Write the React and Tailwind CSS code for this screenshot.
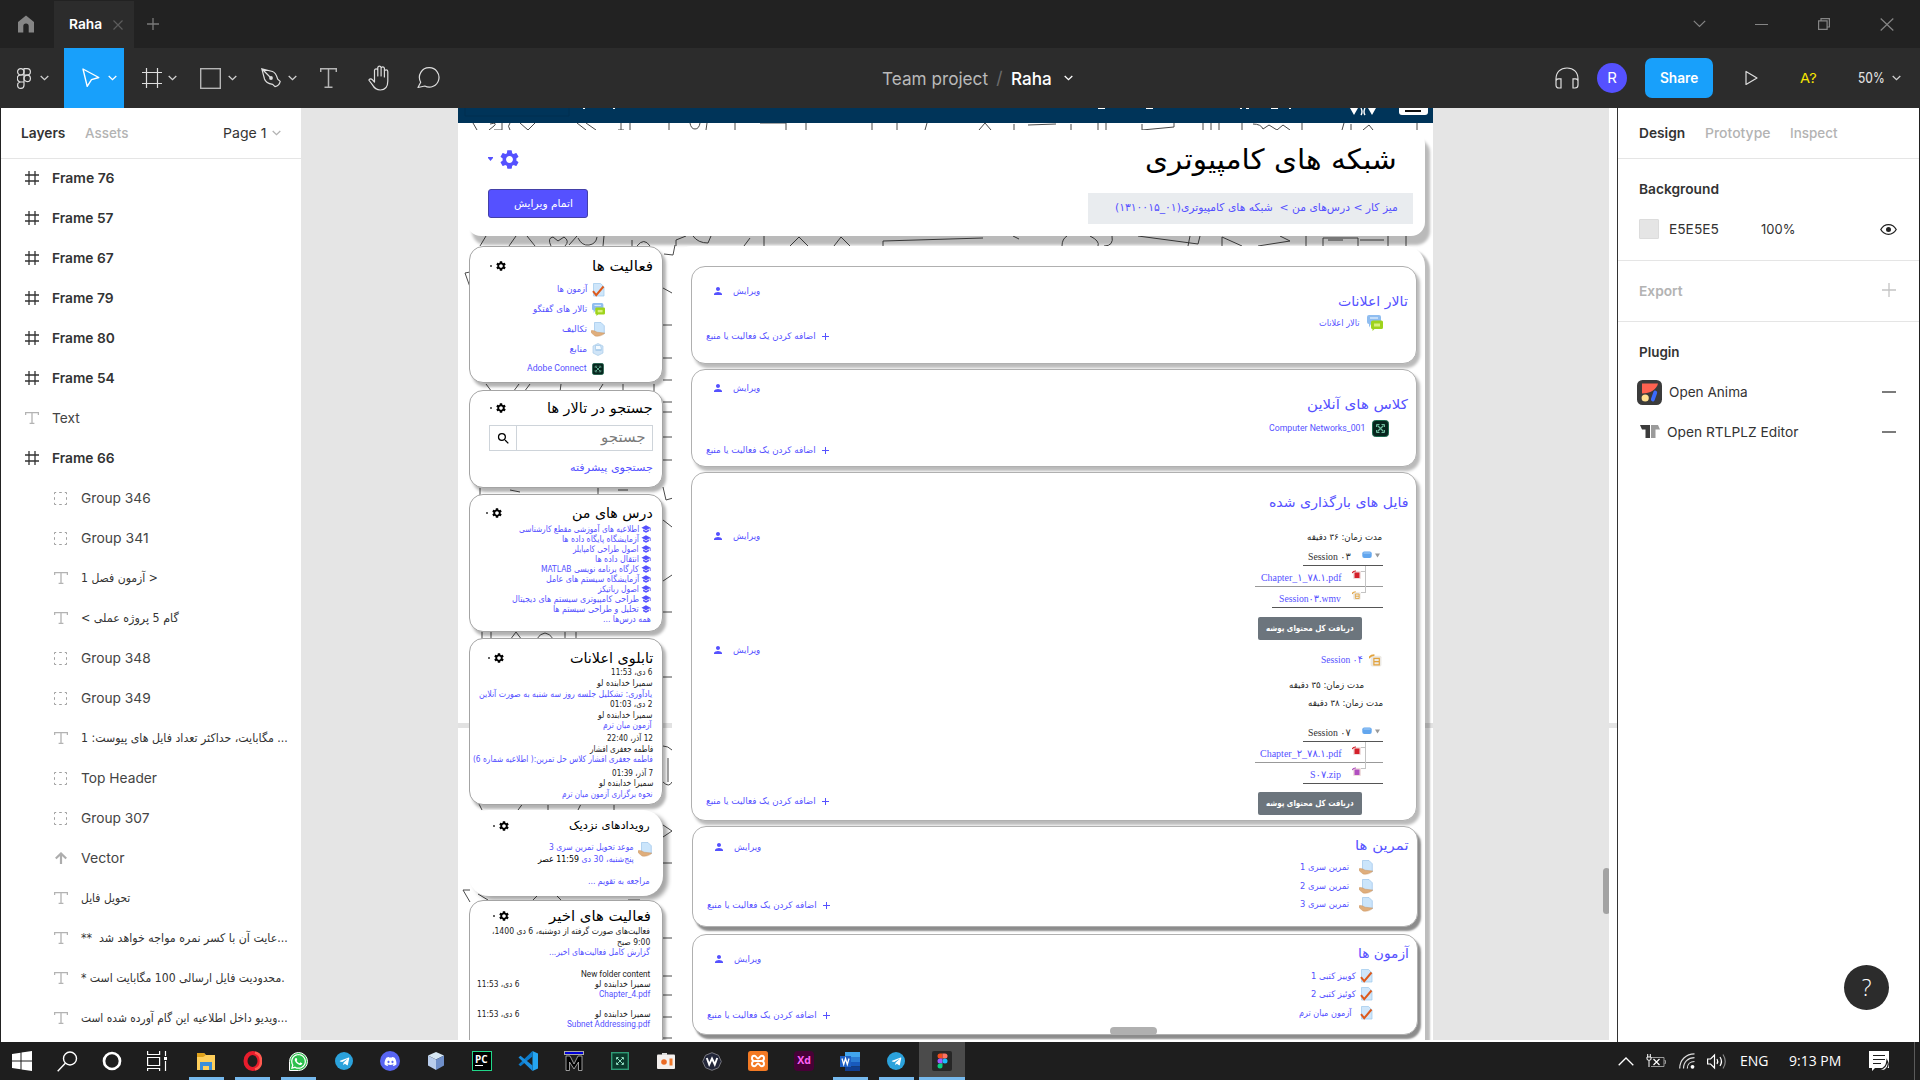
import React, { useLayoutEffect, useRef } from "react";
import { MdSettings, MdPerson, MdSearch, MdSchool } from "react-icons/md";
import { FaWhatsapp, FaTelegramPlane, FaDiscord } from "react-icons/fa";

const FA = "font-['DejaVu_Sans',sans-serif]";
const LINK = "text-[#5551ff]";

/* Single line of text squeezed or stretched to a given width. */
function Fit({ w, dir = "rtl", className = "", children }) {
  const ref = useRef(null);
  useLayoutEffect(() => {
    const apply = () => {
      const el = ref.current;
      if (!el) return;
      el.style.transform = `scaleX(${w / el.offsetWidth})`;
    };
    apply();
    if (document.fonts) document.fonts.ready.then(apply);
  }, [w]);
  return (
    <span dir={dir} className={"block shrink-0 whitespace-nowrap leading-[1.2] " + className} style={{ width: w }}>
      <span ref={ref} className={"inline-block whitespace-nowrap " + (dir === "rtl" ? "origin-right" : "origin-left")}>
        {children}
      </span>
    </span>
  );
}

function Svg({ w, h, vb, className = "", children, ...rest }) {
  return (
    <svg width={w} height={h} viewBox={vb || `0 0 ${w} ${h}`} fill="none" className={"block shrink-0 " + className} {...rest}>
      {children}
    </svg>
  );
}

const Chevron = ({ className = "text-[#d0d0d0]" }) => (
  <Svg w={9} h={6} className={className}>
    <path d="M.7 1l3.8 3.6L8.300 1" stroke="currentColor" strokeWidth="1.3" />
  </Svg>
);

/* ---------- window chrome ---------- */

function TitleBar() {
  return (
    <div className="flex h-12 items-center bg-[#222222]">
      <div className="flex w-[54px] pl-[17px]">
        <Svg w={18} h={18}>
          <path d="M9 .5L1 7v10.500h5.300v-6.200a2.700 2.700 0 015.400 0v6.200H17V7z" fill="#858585" />
        </Svg>
      </div>
      <div className="mt-px flex h-[47px] w-20 items-center bg-[#2c2c2c] pl-[15px]">
        <Fit w={33} dir="ltr" className="text-[13.75px] font-semibold text-white">Raha</Fit>
        <Svg w={10} h={10} className="ml-[11px]">
          <path d="M.5.5l9 9M9.500.5l-9 9" stroke="#5c5c5c" strokeWidth="1.200" />
        </Svg>
      </div>
      <Svg w={12} h={12} className="ml-[13px]">
        <path d="M6 0v12M0 6h12" stroke="#7a7a7a" strokeWidth="1.300" />
      </Svg>
      <div className="ml-auto flex items-center pr-[26px] text-[#858585]">
        <Svg w={13} h={8} className="mr-[49px]"><path d="M.8.8l5.700 5.700L12.200.8" stroke="currentColor" strokeWidth="1.200" /></Svg>
        <Svg w={13} h={2} className="mr-[50px] mt-0.5"><path d="M0 .5h13" stroke="currentColor" /></Svg>
        <Svg w={12} h={12} className="mr-[50px]">
          <path d="M.6 2.900h8.500v8.500H.6zM3 2.500V.6h8.400V9H9.500" stroke="currentColor" strokeWidth="1.200" />
        </Svg>
        <Svg w={14} h={13}><path d="M.7.5l12.600 12M13.300.5L.7 12.500" stroke="currentColor" strokeWidth="1.200" /></Svg>
      </div>
    </div>
  );
}

function ToolBar() {
  const s = { stroke: "#dedede", strokeWidth: 1.2 };
  return (
    <div className="grid h-[60px] grid-cols-[1fr_auto_1fr] items-center bg-[#2c2c2c]">
      <div className="flex h-full items-center">
        <div className="flex w-16 items-center gap-[9px] pl-[17px]">
          <Svg w={14} h={21}>
            <g {...s}>
              <rect x=".6" y=".6" width="6.400" height="6.400" rx="3.200" />
              <path d="M7 .6h3.200a3.200 3.200 0 010 6.400H7zM7 .6v16.700a3.200 3.200 0 11-3.200-3.300H7M3.800 7H7v7H3.800a3.500 3.500 0 010-7z" />
              <circle cx="10.200" cy="10.400" r="3.200" />
            </g>
          </Svg>
          <Chevron />
        </div>
        <div className="flex h-full w-[60px] items-center bg-[#18a0fb] pl-[18px]">
          <Svg w={18} h={20}><path d="M1 1l4.200 17.300 4.300-6.600 7.300-2.200z" stroke="#fff" strokeWidth="1.400" strokeLinejoin="round" /></Svg>
          <Chevron className="ml-2 text-white" />
        </div>
        <Svg w={20} h={20} className="ml-[18px]"><path d="M4.500 0v20M15.500 0v20M0 4.500h20M0 15.500h20" {...s} /></Svg>
        <Chevron className="ml-[6px] text-[#d0d0d0]" />
        <Svg w={21} h={21} className="ml-[23px]"><rect x=".7" y=".7" width="19.600" height="19.600" {...s} strokeWidth="1.400" stroke="#b5b5b5" /></Svg>
        <Chevron className="ml-[7px] text-[#d0d0d0]" />
        <Svg w={20} h={20} className="ml-[24px]">
          <path d="M.8.8l10.700 2.700c2.300.7 4 3.500 5.200 7.600l2.500 2.300c-.5 2.500-2 4.500-5.200 5.300l-2.400-2.300C7 15.600 4.500 14 3.500 11zM1 1l8 8" {...s} />
          <circle cx="10" cy="10" r="1.900" fill="#dedede" />
        </Svg>
        <Chevron className="ml-[7px] text-[#d0d0d0]" />
        <Svg w={17} h={20} className="ml-[23px]"><path d="M.7 4V.7h15.600V4M8.500.7v18.600M4.500 19.300h8" {...s} stroke="#b5b5b5" strokeWidth="1.500" /></Svg>
        <Svg w={23} h={26} className="ml-[31px]">
          <path d="M6.500 15V5.200a1.700 1.700 0 013.300 0V11 2.500a1.700 1.700 0 013.300 0V11 3.200a1.700 1.700 0 013.300 0V12 6.500a1.700 1.700 0 013.400 0V16c0 5.500-2.600 9-7.500 9-4 0-6-1.700-8-5.400L.8 15c1.200-1.500 2.700-1.300 3.700-.2l2 2.200z" {...s} strokeLinejoin="round" />
        </Svg>
        <Svg w={23} h={22} className="ml-[26px]">
          <path d="M12.500.7a9.700 9.700 0 11-4.700 18.300L1 20.500l2.700-5.300A9.700 9.700 0 0112.500.7z" {...s} strokeLinejoin="round" />
        </Svg>
      </div>
      <div className="ml-[35px] flex items-center gap-2 text-[17.5px]">
        <Fit w={106} dir="ltr" className="text-[#b9b9b9]">Team project</Fit>
        <span className="text-[#6d6d6d]">/</span>
        <Fit w={41} dir="ltr" className="font-medium text-white">Raha</Fit>
        <Chevron className="ml-1 text-white" />
      </div>
      <div className="flex items-center justify-end pr-[19px]">
        <Svg w={24} h={22}>
          <path d="M1 17V12C1 5 5.500 1 12 1s11 4 11 11v5M1 14c0-1.500 1-2.200 2.500-2.200H6V21H4c-2 0-3-1-3-3zM23 14c0-1.500-1-2.200-2.500-2.200H18V21h2c2 0 3-1 3-3z" {...s} />
        </Svg>
        <div className="ml-[18px] flex size-[30px] items-center justify-center rounded-full bg-[#5551ff] text-[15px] text-white">R</div>
        <div className="ml-[18px] flex h-10 w-[68px] items-center justify-center rounded-[7px] bg-[#18a0fb]">
          <Fit w={38} dir="ltr" className="text-[14px] font-semibold text-white">Share</Fit>
        </div>
        <Svg w={13} h={16} className="ml-8"><path d="M1 1.500v13L12 8z" {...s} strokeLinejoin="round" /></Svg>
        <Fit w={17} dir="ltr" className="ml-[42px] text-[13.75px] text-[#f7e600]">A?</Fit>
        <Fit w={27} dir="ltr" className="ml-[41px] text-[14px] font-medium text-[#dedede]">50%</Fit>
        <Chevron className="ml-[7px] text-[#d0d0d0]" />
      </div>
    </div>
  );
}

/* ---------- layers panel ---------- */

const LayerIcon = ({ kind }) => {
  if (kind === "frame")
    return <Svg w={14} h={14}><path d="M4 0v14M10 0v14M0 4h14M0 10h14" stroke="#333" strokeWidth="1.300" /></Svg>;
  if (kind === "text")
    return <Svg w={14} h={12}><path d="M.6 3V.7h12.800V3M7 .7v10.600M4.600 11.300h4.800" stroke="#b3b3b3" strokeWidth="1.300" /></Svg>;
  if (kind === "vector")
    return <Svg w={14} h={12}><path d="M7 12V2M1.800 6.500L7 1.500l5.200 5" stroke="#adadad" strokeWidth="2.200" /></Svg>;
  return (
    <Svg w={13} h={13}>
      <path d="M.5 2.200V.5h1.700M5.200.5h2.600M10.800 .5h1.700V2.200M12.500 5.200v2.600M12.500 10.800v1.700H10.800M7.800 12.500H5.200M2.200 12.500H.5V10.800M.5 7.800V5.200" stroke="#a0a0a0" />
    </Svg>
  );
};

const LAYERS = [
  ["frame", "Frame 76", 62], ["frame", "Frame 57", 62], ["frame", "Frame 67", 62],
  ["frame", "Frame 79", 62], ["frame", "Frame 80", 63], ["frame", "Frame 54", 63],
  ["text", "Text", 28, "top"], ["frame", "Frame 66", 63],
  ["group", "Group 346", 70], ["group", "Group 341", 68],
  ["text", "1 آزمون فصل >", 77, "ltr"], ["text", "< گام 5 پروژه عملی", 98, "ltr"],
  ["group", "Group 348", 70], ["group", "Group 349", 70],
  ["text", "... مگابایت، حداکثر تعداد فایل های پیوست: 1", 207, "rtl"],
  ["group", "Top Header", 76], ["group", "Group 307", 69], ["vector", "Vector", 43],
  ["text", "تحویل فایل", 49, "rtl"],
  ["text", "...عایت آن با کسر نمره مواجه خواهد شد\u00a0 **", 207, "rtl"],
  ["text", ".محدودیت فایل ارسالی 100 مگابایت است *", 204, "rtl"],
  ["text", "...ویدیو داخل اطلاعیه این گام آورده شده است", 207, "rtl"],
];

function LayersPanel() {
  return (
    <aside className="flex w-[300px] shrink-0 flex-col bg-white text-[13.75px] text-[#333]">
      <div className="flex h-[51px] items-center border-b border-[#e5e5e5] pl-5 pr-5">
        <Fit w={44} dir="ltr" className="font-semibold">Layers</Fit>
        <Fit w={44} dir="ltr" className="ml-5 font-medium text-[#b3b3b3]">Assets</Fit>
        <Fit w={43} dir="ltr" className="ml-auto">Page 1</Fit>
        <Chevron className="ml-[6px] text-[#b3b3b3]" />
      </div>
      <div className="-mt-px flex flex-col">
        {LAYERS.map(([kind, name, w, d], i) => (
          <div key={i} className={"flex h-10 items-center " + (i > 7 ? "pl-[53px]" : "pl-6")}>
            <div className="flex w-[27px]"><LayerIcon kind={kind} /></div>
            <Fit w={w} dir={d === "rtl" ? "rtl" : "ltr"} className={kind === "frame" ? "font-semibold" : d && d !== "top" ? "font-['DejaVu_Sans',sans-serif] text-[12px]" : "text-[#444]"}>
              {name}
            </Fit>
          </div>
        ))}
      </div>
    </aside>
  );
}

/* ---------- inspector ---------- */

const Minus = () => <Svg w={14} h={2} className="ml-auto"><path d="M0 1h14" stroke="#333" strokeWidth="1.300" /></Svg>;

function DesignPanel() {
  return (
    <aside className="relative flex w-[303px] shrink-0 flex-col border-l border-r border-l-[#333] border-r-[#222] bg-white text-[13.75px] text-[#333]">
      <div className="flex h-[51px] items-center border-b border-[#e5e5e5] pl-[21px] font-medium">
        <Fit w={46} dir="ltr" className="font-semibold">Design</Fit>
        <Fit w={65} dir="ltr" className="ml-5 text-[#b3b3b3]">Prototype</Fit>
        <Fit w={48} dir="ltr" className="ml-5 text-[#b3b3b3]">Inspect</Fit>
      </div>
      <div className="flex h-[102px] flex-col border-b border-[#e5e5e5] pl-[21px] pr-[22px] pt-[10px]">
        <div className="flex h-10 items-center"><Fit w={80} dir="ltr" className="font-semibold">Background</Fit></div>
        <div className="flex h-10 items-center">
          <div className="size-5 rounded-[1px] border border-[#dcdcdc] bg-[#e5e5e5]" />
          <Fit w={50} dir="ltr" className="ml-[10px]">E5E5E5</Fit>
          <Fit w={34} dir="ltr" className="ml-[42px]">100%</Fit>
          <Svg w={17} h={11} className="ml-auto">
            <path d="M.8 5.500C4.500-.9 12.500-.9 16.200 5.500c-3.700 6.400-11.700 6.400-15.400 0z" stroke="#222" strokeWidth="1.300" />
            <circle cx="8.500" cy="5.500" r="2.500" fill="#222" />
          </Svg>
        </div>
      </div>
      <div className="flex h-[61px] items-center border-b border-[#e5e5e5] pl-[21px] pr-[23px]">
        <Fit w={44} dir="ltr" className="font-semibold text-[#b3b3b3]">Export</Fit>
        <Svg w={14} h={14} className="-mt-0.5 ml-auto"><path d="M7 0v14M0 7h14" stroke="#c4c4c4" strokeWidth="1.300" /></Svg>
      </div>
      <div className="flex flex-col pl-[19px] pr-[23px] pt-[10px]">
        <div className="flex h-10 items-center pl-0.5"><Fit w={41} dir="ltr" className="font-semibold">Plugin</Fit></div>
        <div className="flex h-10 items-center">
          <Svg w={25} h={25}>
            <rect width="25" height="25" rx="5.500" fill="#3b3b3b" />
            <path d="M5 3.500h16c-1.500 6-7.500 10-16 10z" fill="#ff6250" />
            <circle cx="8.200" cy="18" r="3.600" fill="#ffdf90" />
            <path d="M18.300 12.500l-2.500 7" stroke="#3b6bff" strokeWidth="3.800" strokeLinecap="round" />
          </Svg>
          <Fit w={79} dir="ltr" className="ml-[7px]">Open Anima</Fit>
          <Minus />
        </div>
        <div className="flex h-10 items-center">
          <Svg w={20} h={14} className="ml-[3px]">
            <path d="M0 0h10v13H5.500V4.500H2z" fill="#3c3c3c" />
            <path d="M11 0h7l2 4.500h-4.500V13H11z" fill="#9b9b9b" />
          </Svg>
          <Fit w={131} dir="ltr" className="ml-[7px]">Open RTLPLZ Editor</Fit>
          <Minus />
        </div>
      </div>
      <div className="absolute bottom-[32px] right-[30px] flex size-[45px] items-center justify-center rounded-full bg-[#2c2c2c] font-['Open_Sans',sans-serif] text-[23px] font-light text-white">?</div>
    </aside>
  );
}

/* ---------- small pictograms of the design ---------- */

const Quiz = () => (
  <Svg w={13} h={14}>
    <path d="M1.500.5h7l3.500 3.300v9.200H1.500z" fill="#cfe6fa" stroke="#9cc8ec" strokeWidth=".7" />
    <path d="M1 8.200l3.200 4L11.500 3.500" stroke="#dd5a1c" strokeWidth="2" />
  </Svg>
);
const Forum = ({ s = 13 }) => (
  <Svg w={s} h={s} vb="0 0 16 16">
    <path d="M2 0h10q2 0 2 2v7H4l-2 3.500V9Q0 9 0 7V2Q0 0 2 0z" fill="#8fbdf0" />
    <path d="M3 3h8" stroke="#d6e8fb" strokeWidth="1.500" />
    <path d="M6 5.500h8.500Q16 5.500 16 7v5.500q0 1.500-1.500 1.500H7.500L5.500 16v-2Q4 14 4 12.500V7Q4 5.500 6 5.500z" fill="#9ed31c" />
    <path d="M7 8.500h6v3H7z" fill="#d8f07c" />
  </Svg>
);
const Assign = () => (
  <Svg w={14} h={15}>
    <path d="M3.500.5h6.500l3.300 3.300v8H3.500z" fill="#cbe5fb" stroke="#9cc4ea" strokeWidth=".7" />
    <path d="M0 8.800c2.500-.8 4 .2 6 1.400l7.800.9c-2 2.500-7 3.800-9.800 2.900L.5 11z" fill="#dfae7c" stroke="#c48b54" strokeWidth=".4" />
  </Svg>
);
const Resource = () => (
  <Svg w={12} h={13}>
    <path d="M1 3l5-2.500L11 3v7l-5 2.500L1 10z" fill="#cfe4f7" stroke="#a9cbe9" strokeWidth=".7" />
    <path d="M3.500 2.500h5l1 4h-6zM3.500 7.500h6" fill="#f4faff" stroke="#93bfe6" strokeWidth=".6" />
  </Svg>
);
const Connect = ({ s = 12 }) => (
  <Svg w={s} h={s} vb="0 0 17 17">
    <rect x=".5" y=".5" width="16" height="16" rx="3" fill="#06251d" stroke="#1d6b50" />
    <path d="M5.500 5.500l6 6M11.500 5.500l-6 6" stroke="#6dbb9d" strokeWidth="1.200" />
    <path d="M4.500 7v-2.500h3M9.500 4.500h3V7M12.500 10v2.500h-3M7.500 12.500h-3V10" stroke="#6dbb9d" />
  </Svg>
);
const FileIcon = ({ c, s = 9 }) => (
  <Svg w={s} h={s} vb="0 0 12 12">
    <rect x="1.500" y="1.500" width="10" height="10" rx="1.500" fill="#ece9e4" />
    <path d="M4.500 4h5v6h-5zM4.500 7h5" stroke={c} strokeWidth="1.100" />
    <path d="M0 4Q1 1 5 1" stroke={c} strokeWidth="1.600" />
  </Svg>
);
const FilledFile = ({ c }) => (
  <Svg w={9} h={9}>
    <rect x="1" y="1" width="8" height="8" rx="1" fill="#f0dede" />
    <rect x="2.500" y="2.500" width="5" height="5.500" fill={c} />
    <path d="M.3 3Q1 .8 4 1" stroke={c} strokeWidth="1.200" />
  </Svg>
);

/* ---------- frame: left column ---------- */

const SIDE = "relative box-border ml-[11px] w-[194px] shrink-0 rounded-[14px] border border-[#a4a4a4] bg-white shadow-[3px_4px_3px_rgba(0,0,0,0.3)] " + FA;

function Head({ w, pr = "pr-[9px]", gear = "pl-[20px]", size = "text-[14px]", className = "", children }) {
  return (
    <div className={`flex items-center justify-between ${pr} ${gear} ${className}`}>
      <Fit w={w} className={`${size} text-black`}>{children}</Fit>
      <div className="flex items-center gap-[3px] text-black">
        <MdSettings size={12} />
        <span className="size-0.5 rounded-full bg-[#333]" />
      </div>
    </div>
  );
}

const Line = ({ w, cls = "", children }) => (
  <div className={"flex h-[10px] items-center " + cls}>
    <Fit w={w} className="text-[9px]">{children}</Fit>
  </div>
);

const COURSES = [
  ["اطلاعیه های آموزشی مقطع کارشناسی", 120], ["آزمایشگاه پایگاه داده ها", 77], ["اصول طراحی کامپایلر", 66],
  ["انتقال داده ها", 44], ["کارگاه برنامه نویسی MATLAB", 98], ["آزمایشگاه سیستم های عامل", 93],
  ["اصول رباتیکز", 41], ["طراحی کامپیوتری سیستم های دیجیتال", 127], ["تحلیل و طراحی سیستم ها", 86],
];

function SideColumn() {
  const acts = [
    ["آزمون ها", 30, <Quiz />, "h-[19px]"], ["تالار های گفتگو", 54, <Forum />, "h-5"],
    ["تکالیف", 25, <Assign />, "h-5"], ["منابع", 18, <Resource />, "h-5"], ["Adobe Connect", 60, <Connect />, "h-[19px]"],
  ];
  return (
    <div className="flex h-[794px] w-[214px] shrink-0 flex-col overflow-hidden" dir="ltr">
      <section dir="rtl" className={SIDE + " h-[137px]"}>
        <Head w={61} className="mt-[8px] h-[22px]">فعالیت ها</Head>
        <div className="mt-[3px] flex flex-col pr-[57px]">
          {acts.map(([t, w, icon, h]) => (
            <div key={t} className={"flex items-center gap-[4px] " + h}>
              <div className="flex w-[14px] justify-center">{icon}</div>
              <Fit w={w} dir={t[0] === "A" ? "ltr" : "rtl"} className={LINK + (t[0] === "A" ? " font-[Roboto] text-[9px]" : " text-[9px]")}>{t}</Fit>
            </div>
          ))}
        </div>
      </section>

      <section dir="rtl" className={SIDE + " mt-[7px] h-[98px]"}>
        <Head w={106} className="mt-[7px] h-[20px]">جستجو در تالار ها</Head>
        <div className="mr-[9px] mt-[7px] flex h-[26px] w-[164px] items-center border border-[#ced4da]">
          <div className="flex h-full flex-1 items-center pb-0.5 pr-[6px]"><Fit w={45} className="text-[14px] text-[#7a7a7a]">جستجو</Fit></div>
          <div className="flex h-full w-[27px] items-center justify-center border-r border-[#ced4da] text-black"><MdSearch size={15} /></div>
        </div>
        <div className="mr-[9px] mt-[7px] flex h-[18px] items-center"><Fit w={83} className={"text-[10.5px] " + LINK}>جستجوی پیشرفته</Fit></div>
      </section>

      <section dir="rtl" className={SIDE + " mt-[6px] h-[138px]"}>
        <Head w={81} gear="pl-[16px]" className="mt-[8px] h-5">درس های من</Head>
        <div className={"mt-[1px] flex flex-col pr-[11px] " + LINK}>
          {COURSES.map(([t, w]) => (
            <div key={t} className="flex h-[10px] items-center gap-[2px]">
              <MdSchool size={10} />
              <Fit w={w} className="text-[9px]">{t}</Fit>
            </div>
          ))}
          <Line w={48}>همه درس‌ها ...</Line>
        </div>
      </section>

      <section dir="rtl" className={SIDE + " mt-[6px] h-[167px]"}>
        <Head w={83} gear="pl-[18px]" className="mt-[8px] h-[22px]">تابلوی اعلانات</Head>
        <div className="-mt-px flex flex-col pr-[10px] text-[#222]">
          <Line w={41} cls="-mt-px">6 دی، 11:53</Line>
          <Line w={56} cls="mt-[1px]">سمیرا خدابنده لو</Line>
          <Line w={173} cls={"mt-[1px] " + LINK}>یادآوری: تشکلیل جلسه روز سه شنبه به صورت آنلاین</Line>
          <Line w={42}>2 دی، 01:03</Line>
          <Line w={55} cls="mt-px">سمیرا خدابنده لو</Line>
          <Line w={49} cls={LINK}>آزمون میان ترم</Line>
          <Line w={46} cls="-mr-px mt-[3px]">12 آذر، 22:40</Line>
          <Line w={63} cls="-mr-px mt-px">فاطمه جعفری افشار</Line>
          <Line w={180} cls={"-mr-px " + LINK}>فاطمه جعفری افشار کلاس حل تمرین:( اطلاعیه شماره 6)</Line>
          <Line w={41} cls="-mr-px mt-[4px]">7 آذر، 01:39</Line>
          <Line w={55} cls="-mr-px">سمیرا خدابنده لو</Line>
          <Line w={91} cls={"-mr-px mt-px " + LINK}>نحوه برگزاری آزمون میان ترم</Line>
        </div>
      </section>

      <section dir="rtl" className={"relative ml-[11px] mt-[5px] h-[86px] w-[194px] shrink-0 rounded-[20px] bg-white shadow-[5px_4px_4px_rgba(0,0,0,0.35)] " + FA}>
        <Head w={81} pr="pr-[13px]" gear="pl-[24px]" size="text-[11px]" className="h-[32px]">رویدادهای نزدیک</Head>
        <div className="flex pr-[11px]">
          <Assign />
          <div className="mr-[4px] flex flex-col">
            <Line w={85} cls={LINK}>موعد تحویل تمرین سری 3</Line>
            <Line w={96} cls="mt-[2px]"><span className={LINK}>پنج‌شنبه، 30 دی</span> <span className="text-black">11:59 عصر</span></Line>
          </div>
        </div>
        <Line w={62} cls={"mt-[12px] pr-[13px] " + LINK}>مراجعه به تقویم ...</Line>
      </section>

      <section dir="rtl" className={SIDE + " mt-[4px] h-[160px]"}>
        <Head w={102} pr="pr-[11px]" gear="pl-[23px]" className="mt-[4px] h-[22px]">فعالیت های اخیر</Head>
        <div className="flex flex-col pr-[12px] text-[#222]">
          <Line w={158} cls="-mt-px">فعالیت‌های صورت گرفته از دوشنبه، 6 دی 1400،</Line>
          <Line w={33} cls="mt-px">9:00 صبح</Line>
          <Line w={101} cls={LINK}>گزارش کامل فعالیت‌های اخیر...</Line>
          <div className="mt-[12px] flex h-[10px] items-center"><Fit w={69} dir="ltr" className="font-[Roboto] text-[9px]">New folder content</Fit></div>
          <div className="flex justify-between pl-[7px]"><Line w={56}>سمیرا خدابنده لو</Line><Line w={42}>6 دی، 11:53</Line></div>
          <div className="flex h-[10px] items-center"><Fit w={51} dir="ltr" className={"font-[Roboto] text-[9px] " + LINK}>Chapter_4.pdf</Fit></div>
          <div className="mt-[10px] flex justify-between pl-[7px]"><Line w={56}>سمیرا خدابنده لو</Line><Line w={42}>6 دی، 11:53</Line></div>
          <div className="flex h-[10px] items-center"><Fit w={83} dir="ltr" className={"font-[Roboto] text-[9px] " + LINK}>Subnet Addressing.pdf</Fit></div>
        </div>
      </section>
    </div>
  );
}

/* ---------- frame: main column ---------- */

const Edit = ({ cls }) => (
  <div className={"flex h-4 items-center gap-[9px] pl-[20px] text-[#5551ff] " + cls}>
    <MdPerson size={12} />
    <Fit w={27} className="text-[9px]">ویرایش</Fit>
  </div>
);
const Add = ({ cls }) => (
  <div className={"flex h-4 items-center gap-[6px] pl-[14px] text-[#5551ff] " + cls}>
    <Fit w={110} className="text-[9px]">اضافه کردن یک فعالیت یا منبع</Fit>
    <Svg w={7} h={7}><path d="M3.500 0v7M0 3.500h7" stroke="#5551ff" /></Svg>
  </div>
);

function MainCard({ cls, left, children }) {
  return (
    <section className={"flex w-[726px] shrink-0 justify-between rounded-[14px] border border-[#b0b0b0] bg-white " + cls + " " + FA}>
      <div className="flex flex-col">{left}</div>
      <div dir="rtl" className="flex flex-col">{children}</div>
    </section>
  );
}
const SOFT = "shadow-[3px_4px_3px_rgba(0,0,0,0.27)]";
const HARD = "shadow-[3px_4px_2px_rgba(0,0,0,0.45)]";

const CardTitle = ({ w, cls, children }) => (
  <div className={"flex h-5 items-center pr-[8px] " + cls}>
    <Fit w={w} className={"text-[13.5px] " + LINK}>{children}</Fit>
  </div>
);
const Item = ({ w, cls, icon, ltr, children }) => (
  <div className={"flex h-4 items-center " + cls}>
    {icon}
    <Fit w={w} dir={ltr ? "ltr" : "rtl"} className={LINK + (ltr ? " font-[Roboto] text-[9px]" : " text-[9px]")}>{children}</Fit>
  </div>
);

const FolderRow = ({ children }) => (
  <div className="mr-[33px] flex h-[21px] w-20 items-center border-b border-[#555] pt-1">
    <svg width="5" height="5" viewBox="0 0 5 5" className="mb-[3px] mr-[3px] block shrink-0"><path d="M0 .5h5L2.500 4.500z" fill="#999" /></svg>
    <Svg w={10} h={8} className="mb-1 ml-[11px] mr-[3px]"><rect x=".3" y=".5" width="9.400" height="6.500" rx="2" fill="#62a6ee" /><path d="M1.500 2h7" stroke="#a9cff7" /></Svg>
    <Fit w={43} dir="ltr" className="font-['Liberation_Serif','DejaVu_Sans',serif] text-[10px] text-[#333]">{children}</Fit>
  </div>
);
/* The bordered span before the icon draws one branch of the folder tree. */
const FileRow = ({ w, cls, icon, last, children }) => (
  <div className={"mr-[33px] flex h-[21px] items-center border-b " + cls}>
    <span className={"mr-[17px] w-[5px] shrink-0 self-start border-b border-r border-[#c4c4c4] " + (last ? "-mt-[15px] h-[21px]" : "h-[6px]")} />
    <div className="mb-1 ml-[11px] flex">{icon}</div>
    <div className="flex pt-[3px]">
      <Fit w={w} dir="ltr" className={"font-['Liberation_Serif','DejaVu_Sans',serif] text-[10px] " + LINK}>{children}</Fit>
    </div>
  </div>
);
const Duration = ({ cls, children }) => (
  <div className={"flex h-4 items-center " + cls}><Fit w={75} className="text-[9px] text-[#222]">{children}</Fit></div>
);
const Download = ({ cls }) => (
  <div className={"mr-[54px] flex h-[23px] w-[104px] items-center justify-center rounded-[2px] bg-[#6c757d] " + cls}>
    <Fit w={88} className="text-[8.5px] font-bold text-white">دریافت کل محتوای پوشه</Fit>
  </div>
);

function MainColumn() {
  return (
    <main dir="ltr" className="flex h-[794px] w-[753px] shrink-0 flex-col rounded-t-[20px] bg-white pl-[19px] pt-5 shadow-[5px_4px_2px_rgba(0,0,0,0.26)]">
      <MainCard cls={SOFT + " h-[98px]"} left={<><Edit cls="mt-4" /><Add cls="mt-[29px]" /></>}>
        <CardTitle w={70} cls="mt-[24px]">تالار اعلانات</CardTitle>
        <Item w={41} cls="mt-[4px] gap-[7px] pr-[33px]" icon={<Forum s={16} />}>تالار اعلانات</Item>
      </MainCard>
      <MainCard cls={SOFT + " mt-[5px] h-[98px]"} left={<><Edit cls="mt-[10px]" /><Add cls="mt-[46px]" /></>}>
        <CardTitle w={101} cls="mt-[24px]">کلاس های آنلاین</CardTitle>
        <Item w={96} ltr cls="mt-[6px] gap-[7px] pr-[27px]" icon={<Connect s={17} />}>Computer Networks_001</Item>
      </MainCard>
      <MainCard cls={SOFT + " mt-[5px] h-[349px]"} left={<><Edit cls="mt-[55px]" /><Edit cls="mt-[98px]" /><Add cls="mt-[135px]" /></>}>
        <CardTitle w={139} cls="mt-[19px]">فایل های بارگذاری شده</CardTitle>
        <Duration cls="mt-[17px] pr-[34px]">مدت زمان: ۳۶ دقیقه</Duration>
        <FolderRow>Session ۰۳</FolderRow>
        <FileRow w={80} cls="w-[128px] border-[#999]" icon={<FilledFile c="#d4202a" />}>Chapter_۱_۷۸.۱.pdf</FileRow>
        <FileRow w={62} last cls="w-[111px] border-[#555]" icon={<FileIcon c="#e2a33d" />}>Session۰۳.wmv</FileRow>
        <Download cls="mt-[9px]" />
        <div className="mt-[12px] flex h-4 items-center gap-[6px] pr-[34px]">
          <FileIcon c="#e2a33d" s={13} />
          <Fit w={42} dir="ltr" className={"font-['Liberation_Serif','DejaVu_Sans',serif] text-[10px] " + LINK}>Session ۰۴</Fit>
        </div>
        <Duration cls="mt-[9px] pr-[52px]">مدت زمان: ۳۵ دقیقه</Duration>
        <Duration cls="mt-[2px] pr-[33px]">مدت زمان: ۳۸ دقیقه</Duration>
        <div className="h-[10px]" />
        <FolderRow>Session ۰۷</FolderRow>
        <FileRow w={81} cls="w-[128px] border-[#999]" icon={<FilledFile c="#d4202a" />}>Chapter_۲_۷۸.۱.pdf</FileRow>
        <FileRow w={31} last cls="w-20 border-[#555]" icon={<FilledFile c="#b04fc0" />}>S۰۷.zip</FileRow>
        <Download cls="mt-[8px]" />
      </MainCard>
      <MainCard cls={HARD + " ml-px mt-[5px] h-[101px]"} left={<><Edit cls="mt-[12px]" /><Add cls="mt-[42px]" /></>}>
        <CardTitle w={54} cls="mt-[8px]">تمرین ها</CardTitle>
        <Item w={49} cls="mt-[4px] gap-[10px] pr-[44px]" icon={<Assign />}>تمرین سری 1</Item>
        <Item w={49} cls="mt-[3px] gap-[10px] pr-[44px]" icon={<Assign />}>تمرین سری 2</Item>
        <Item w={49} cls="mt-[2px] gap-[10px] pr-[44px]" icon={<Assign />}>تمرین سری 3</Item>
      </MainCard>
      <MainCard cls={HARD + " ml-px mt-[7px] h-[101px]"} left={<><Edit cls="mt-4" /><Add cls="mt-[40px]" /></>}>
        <CardTitle w={51} cls="mt-[8px]">آزمون ها</CardTitle>
        <Item w={45} cls="mt-[5px] gap-[4px] pr-[44px]" icon={<Quiz />}>کوییز کتبی 1</Item>
        <Item w={45} cls="mt-[2px] gap-[4px] pr-[44px]" icon={<Quiz />}>کوئیز کتبی 2</Item>
        <Item w={53} cls="mt-[3px] gap-[8px] pr-[44px]" icon={<Quiz />}>آزمون میان ترم</Item>
      </MainCard>
    </main>
  );
}

/* Line-art wallpaper that shows through the gaps between the cards. */
const Doodles = () => (
  <svg width="975" height="932" viewBox="0 0 975 932" fill="none" className="absolute left-0 top-0 block" stroke="#4a4a4a">
    <path d="M15 15l4 7M32 16q8-2 4 2l-5 4M36 22h8M44 15v7M52 15q-3 3 0 7M62 15l8 7 7-7M119 15l9 7M128 15l10 7M163 15v7M160 22h6M172 15v7M211 15v7M232 15q1 6 5 6t5-6M249 15l-1 7M277 15v7M302 15h26v7M348 15v7M414 15v7M439 15v7M467 22l2-7M521 22l6-7 6 7M556 16v6M570 17l28-1M613 16v6M640 22v-7M648 22v-7M684 16v6l32-3v-4M745 15v7M753 22v-7M761 15v7M784 15v7M795 16q8 0 10 5l6-4 8 5 6-5 7 5M844 15v7M884 22l2-7M893 22v-6M905 22l6-5 4 5M959 15v7" />
    <path d="M22 138l6-10M51 138l7-10M69 128l8 10M93 138q-4-8 2-9l5 4 6-4q6 4 1 9M120 130q4 8 11 7t8-8M111 137l8-9M145 138l1-10M174 138v-6M179 138q7-9 13 0M218 138v-6l10-4M235 128q5 7 15 7l3-7M286 138l6-8M306 128v10M332 138l9-9 9 9M376 138l7-9 9 9M425 138v-5l100-3M555 128l6 3M604 138q0-7 5-10M632 128q10 5 8 10M646 138q10 0 8-10M680 128l60 8 2-8M730 138l2-10M764 138v-9l20 9M800 138l32-5-10-5M848 128v10M865 138v-8h35v8M870 132h15M902 132h24M930 128v10M948 128v10" />
    <path d="M206 146l9 1 2-10M205 180l9 5M205 217h9M205 250h9M205 272h9M205 294h9M7 165l10-2M7 165l5 14M28 276l6 8M55 284l6-8M66 284l6-8M103 276l-1 8M140 284l5-8M165 276v8M196 276v8" />
    <path d="M205 304h9M205 329h9M205 352h9M22 380v8M52 382l10 2M140 380v8M160 382h10M205 379l3 13 7-2M205 412l9 7M205 473l9-6M205 504h9M24 522v10M33 522v10M52 532l6-8 6 8M78 532q9-14 18 0M107 522v10M118 522v10M205 569h9M205 638q5 0 9 4M210 650v24M205 674q6 6 9 0M205 717l9 6-9 6M205 755h9M205 830h9" />
    <path d="M20 694l4 8M60 702l6-8M90 694v8M120 702l4-8M156 694v8M20 786l10 6M75 792l6-6M97 786l6 6M170 792h12M5 782h7M5 782l7 12M205 868h9M205 887h9M205 909h9M205 930h9" />
  </svg>
);

function DesignFrame() {
  return (
    <div className="absolute left-[157px] top-0 h-[932px] w-[975px] overflow-hidden bg-white">
      <Doodles />
      <div className="absolute left-0 top-[615px] h-[5px] w-full bg-[#e2e2e2]" />
      <div className="relative h-[15px] overflow-hidden bg-[#003459]">
        <Svg w={975} h={15}>
          <path d="M7 0v8h104V0" stroke="#002e50" />
          <path d="M125 0h2v1h-2zM155 0h2v1h-2zM640 0h7v1h-7zM688 0h7v1h-7zM782 0h2v1h-2zM788 0h3v1h-3zM813 0h7v1h-7zM831 0h2v1h-2z" fill="#fff" />
          <path d="M892 0h8l-4 7zM910 0h8l-4 7z" fill="#fff" />
          <path d="M903 0q2 4 0 7M907 0q-2 4 0 7" stroke="#fff" strokeWidth="1.400" />
          <path d="M941 0h29v4q0 3-3 3h-23q-3 0-3-3z" fill="#fff" />
          <path d="M947 3h16" stroke="#111" strokeWidth="2" />
        </Svg>
      </div>
      <header className={"relative ml-[9px] mt-[7px] flex h-[106px] w-[958px] justify-between rounded-[14px] bg-white shadow-[5px_9px_3px_rgba(0,0,0,0.27)] " + FA}>
        <div className="flex flex-col pl-[21px] pt-[17px]">
          <div className={"flex h-6 items-center gap-[5px] " + LINK}>
            <Svg w={5} h={4}><path d="M0 0h5v1L2.500 4 0 1z" fill="#5551ff" /></Svg>
            <MdSettings size={23} />
          </div>
          <div dir="rtl" className="mt-[18px] flex h-[29px] w-[100px] items-center rounded-[3px] border border-[#4340a8] bg-[#5551ff] pb-px pr-[14px]">
            <Fit w={59} className="text-[10.5px] text-white">اتمام ویرایش</Fit>
          </div>
        </div>
        <div dir="rtl" className="flex flex-col pr-[12px] pt-[10px]">
          <div className="flex h-10 items-center pr-4"><Fit w={252} className="text-[28px] text-black">شبکه های کامپیوتری</Fit></div>
          <div className="mt-[13px] flex h-[31px] w-[325px] items-center bg-[#e9ecef] pb-px pr-[15px]">
            <Fit w={283} className={"text-[11px] " + LINK}>میز کار &gt; درس‌های من &gt; &nbsp;شبکه های کامپیوتری(<bdo dir="ltr">۱۳۱۰۰۱۵_۰۱</bdo>)</Fit>
          </div>
        </div>
      </header>
      <div className="relative mt-[10px] flex">
        <SideColumn />
        <MainColumn />
      </div>
    </div>
  );
}

/* ---------- taskbar ---------- */

const Slot = ({ bar, active, children }) => (
  <div className={"flex h-full w-[46px] flex-col items-center " + (active ? "bg-[#4b4b4b]" : "")}>
    <div className="flex flex-1 items-center justify-center pt-[3px]">{children}</div>
    <div className={"h-[3px] " + (bar || active ? "bg-[#76b9ed] " : "") + (active ? "w-full" : "w-[35px]")} />
  </div>
);
const Tg = () => (
  <div className="flex size-[18px] items-center justify-center rounded-full bg-[#2ba2dc] text-white"><FaTelegramPlane size={11} /></div>
);

function Taskbar() {
  return (
    <footer className="flex h-[38px] items-center bg-[#1e1e1e]">
      <div className="flex h-full w-[183px] items-center pl-3">
        <Svg w={20} h={20}><path d="M0 3l8.500-1.200v7.700H0zM9.500 1.600L20 0v9.500H9.500zM0 10.500h8.500v7.700L0 17zM9.500 10.500H20V20L9.500 18.400z" fill="#fff" /></Svg>
        <Svg w={21} h={21} className="ml-[25px]"><circle cx="13" cy="7.500" r="6.500" stroke="#fff" strokeWidth="1.400" /><path d="M8.300 12.300L.7 20.300" stroke="#fff" strokeWidth="1.400" /></Svg>
        <Svg w={20} h={20} className="ml-6"><circle cx="10" cy="10" r="8" stroke="#fff" strokeWidth="2.700" /></Svg>
        <Svg w={21} h={20} className="ml-[25px]"><path d="M.6 0v3.500h12V0M.6 6.500h12v8H.6zM.6 20v-2.500h12V20M18.500 0v5M18.500 10v10" stroke="#fff" strokeWidth="1.200" /><path d="M17 6h3v3h-3z" fill="#fff" /></Svg>
      </div>
      <Slot bar>
        <Svg w={18} h={17}><path d="M0 0h7l2 2h9v15H0z" fill="#ffcf5b" /><path d="M0 0h7l1.500 2.500L6 4H0z" fill="#e0a21b" /><path d="M3 17V9h12v8h-3v-4H6v4z" fill="#3b8edb" /></Svg>
      </Slot>
      <Slot bar>
        <Svg w={19} h={20}><ellipse cx="9.500" cy="10" rx="7" ry="8" stroke="#e81c2c" strokeWidth="4" /><path d="M12 1.500c8 2 8 15 0 17" stroke="#ff5a50" strokeWidth="2.600" /></Svg>
      </Slot>
      <Slot bar>
        <div className="flex size-[19px] items-center justify-center rounded-full rounded-bl-[3px] border border-white bg-[#2bc04c] text-white"><FaWhatsapp size={17} /></div>
      </Slot>
      <Slot><Tg /></Slot>
      <Slot><div className="flex size-5 items-center justify-center rounded-full bg-[#5865f2] text-white"><FaDiscord size={13} /></div></Slot>
      <Slot>
        <Svg w={18} h={20}><path d="M9 1l8 3.500-8 4-8-4z" fill="#d7e8f4" /><path d="M1 4.500l8 4V19l-8-4.500z" fill="#b9cdec" /><path d="M17 4.500l-8 4V19l8-4.500z" fill="#6f8fc9" /></Svg>
      </Slot>
      <Slot>
        <div className="flex size-5 flex-col border border-[#21d789] bg-black pl-[2px] pt-[1px] font-['Open_Sans',sans-serif] text-[10px] font-bold leading-[12px] text-white">
          PC<span className="h-px w-2 bg-white" />
        </div>
      </Slot>
      <Slot>
        <Svg w={20} h={20}>
          <path d="M14.500 0L20 2.500v15L14.500 20z" fill="#25a5f0" />
          <path d="M14.500 0v5.500L2.500 15.300.5 13.600z" fill="#0a7acb" />
          <path d="M14.500 20v-5.500L2.500 4.700.5 6.400z" fill="#1b8fe0" />
        </Svg>
      </Slot>
      <Slot>
        <div className="flex size-5 flex-col items-center">
          <span className="h-[4px] w-5 border border-[#aaa] bg-[#0000d8]" />
          <Svg w={18} h={16}><path d="M1 15.500V1h4l4 8 4-8h4v14.500h-3.500V7L9 14 4.500 7v8.500z" fill="#000" stroke="#bbb" strokeWidth=".8" /></Svg>
        </div>
      </Slot>
      <Slot>
        <Svg w={18} h={18}><rect x=".7" y=".7" width="16.600" height="16.600" fill="#0b3a2c" stroke="#2f9a75" strokeWidth="1.400" /><path d="M6 6l6 6M12 6l-6 6M5.500 7.500v-2h2M10.500 5.500h2v2M12.500 10.500v2h-2M7.500 12.500h-2v-2" stroke="#8fdcc0" /></Svg>
      </Slot>
      <Slot>
        <Svg w={18} h={16}><rect y="1.500" width="18" height="14.500" rx="1" fill="#f4f0ee" /><path d="M5 0h5v2H5z" fill="#ddd" /><circle cx="7" cy="9" r="2.800" fill="#ea6a24" /><path d="M12.500 5.500h3v7h-3z" fill="#f0792c" /></Svg>
      </Slot>
      <Slot>
        <Svg w={20} h={19}><path d="M10 .7l6.500 2.600 2.800 6.200-2.800 6.200L10 18.300l-6.500-2.600L.7 9.500l2.800-6.200z" fill="#23273a" stroke="#77777f" /><path d="M4.800 6l2.400 6.500L10 6.500l2.800 6L15.200 6" stroke="#fff" strokeWidth="1.900" /></Svg>
      </Slot>
      <Slot>
        <Svg w={20} h={20}><rect width="20" height="20" rx="2.500" fill="#f37a24" /><path d="M10 10H6.500M10 10h3.500M6.300 10C3.200 9.500 3.200 4.800 6.300 4.800c2 0 2.200 2.700 3.700 2.700s1.700-2.700 3.700-2.700c3.100 0 3.100 4.700 0 5.200 3.100.5 3.100 5.200 0 5.200-2 0-2.200-2.700-3.700-2.700s-1.700 2.700-3.700 2.700c-3.100 0-3.100-4.700 0-5.200z" stroke="#fff" strokeWidth="1.900" /></Svg>
      </Slot>
      <Slot>
        <div className="flex size-5 items-center justify-center rounded-[4px] bg-[#470137] font-['Open_Sans',sans-serif] text-[10.500px] font-bold text-[#ff61f6]">Xd</div>
      </Slot>
      <Slot bar>
        <Svg w={20} h={19}><path d="M5 0h15v5H5z" fill="#41a5ee" /><path d="M5 5h15v5H5z" fill="#2b7cd3" /><path d="M5 10h15v4.500H5z" fill="#185abd" /><path d="M5 14.500h15V19H5z" fill="#103f91" /><rect y="4" width="11" height="11" fill="#1d5fc4" /><path d="M2 6.500l1.700 6 1.800-6 1.800 6 1.700-6" stroke="#fff" strokeWidth="1.300" /></Svg>
      </Slot>
      <Slot bar><Tg /></Slot>
      <Slot active>
        <div className="flex size-5 items-center justify-center rounded-[2px] bg-[#262626]">
          <Svg w={11} h={16}>
            <path d="M5.500.5H3a2.500 2.500 0 000 5h2.500z" fill="#f24e1e" /><path d="M5.500.5H8a2.500 2.500 0 010 5H5.500z" fill="#ff7262" />
            <path d="M5.500 5.500H3a2.500 2.500 0 000 5h2.500z" fill="#a259ff" /><circle cx="8" cy="8" r="2.500" fill="#1abcfe" />
            <path d="M5.500 10.500H3a2.500 2.500 0 102.500 2.500z" fill="#0acf83" />
          </Svg>
        </div>
      </Slot>
      <div className="ml-auto flex h-full items-center font-['Open_Sans',sans-serif] text-[14.500px] text-white">
        <Svg w={16} h={9}><path d="M.7 8.300L8 1l7.300 7.300" stroke="#fff" strokeWidth="1.300" /></Svg>
        <Svg w={20} h={14} className="ml-3">
          <path d="M5 3.500h13v9H5M18.500 6.500h1v3h-1" stroke="#9a9a9a" /><path d="M7.500 5l6 6M13.500 5l-6 6" stroke="#fff" strokeWidth="1.200" />
          <path d="M1 3h4v2.500q-2 2-4 0zM1.700 0v3M4.300 0v3M3 7v6" stroke="#fff" />
        </Svg>
        <Svg w={16} h={16} className="ml-[13px]">
          <path d="M.7 15.500C.7 7 7 .9 15.500.9M4.500 15.500C4.500 9 9 4.700 15.500 4.700M8.300 15.500c0-4.300 3-7 7.200-7" stroke="#ddd" strokeWidth="1.200" /><circle cx="13.500" cy="13.800" r="1.900" fill="#fff" />
        </Svg>
        <Svg w={20} h={17} className="ml-3">
          <path d="M.6 6h3L7.500 2v13l-3.900-4h-3z" stroke="#fff" strokeWidth="1.200" /><path d="M10 6q1.500 2.500 0 5M13 4q3 4.500 0 9" stroke="#fff" strokeWidth="1.200" /><path d="M16 1.500q4.500 7 0 14" stroke="#888" strokeWidth="1.200" />
        </Svg>
        <Fit w={29} dir="ltr" className="ml-[13px]">ENG</Fit>
        <Fit w={52} dir="ltr" className="ml-5">9:13 PM</Fit>
        <Svg w={21} h={21} className="ml-7">
          <path d="M0 0h20v17H6l-3 3v-3H0z" fill="#fff" /><path d="M4 4.500h12M4 8.500h12M4 12.500h8" stroke="#1e1e1e" strokeWidth="1.200" />
          <path d="M18 9.500q3 5-1.500 9-3 2-6 0 7-1 7.500-9z" fill="#fff" stroke="#1e1e1e" strokeWidth="1.300" />
        </Svg>
        <span className="ml-6 mr-[5px] h-full w-px bg-[#5a5a5a]" />
      </div>
    </footer>
  );
}

export default function App() {
  return (
    <div className="flex h-[1080px] w-[1920px] flex-col overflow-hidden bg-[#222222] font-[Inter,sans-serif]">
      <TitleBar />
      <ToolBar />
      <div className="flex h-[934px] bg-white">
        <div className="w-px shrink-0 bg-[#222]" />
        <LayersPanel />
        <div className="relative h-[932px] w-[1308px] shrink-0 overflow-hidden bg-[#e5e5e5]">
          <DesignFrame />
          <div className="absolute left-[1302px] top-[760px] h-[46px] w-[7px] rounded-full bg-[#a3a3a3]" />
          <div className="absolute left-[809px] top-[919px] h-[8px] w-[47px] rounded-full bg-[#b0b0b0]" />
        </div>
        <div className="flex w-2 shrink-0 flex-col justify-between bg-white pb-[312px] pt-[615px]">
          <span className="h-[5px] w-full bg-[#e5e5e5]" />
        </div>
        <DesignPanel />
      </div>
      <Taskbar />
    </div>
  );
}
